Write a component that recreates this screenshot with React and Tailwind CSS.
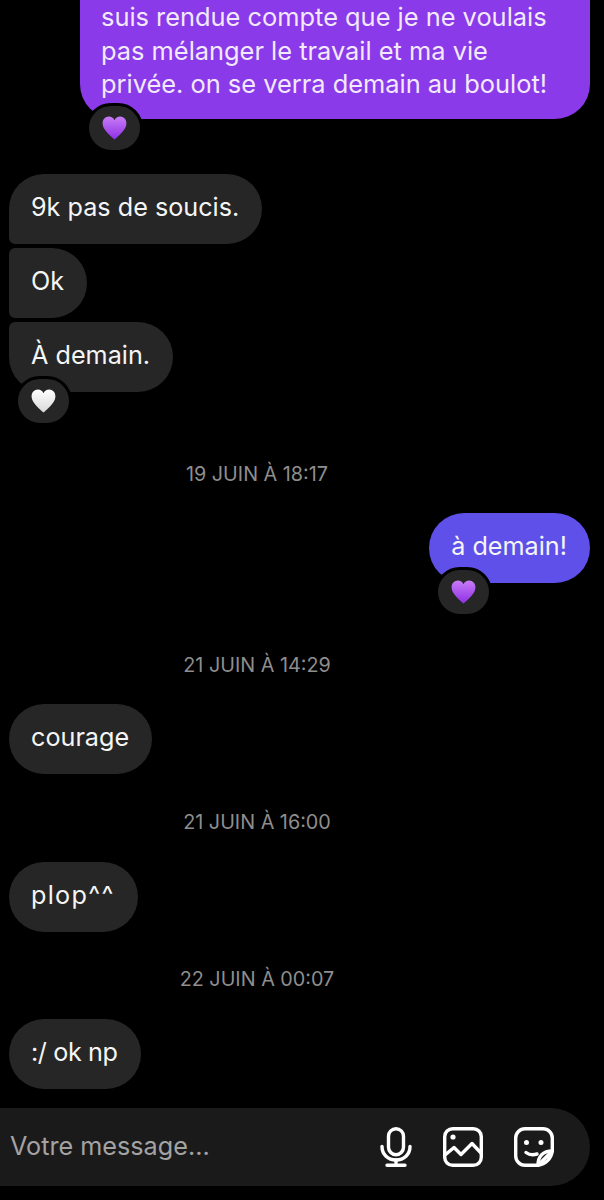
import React from "react";

const HEART = "M12.5 23.5C10 21 1 14.5 .6 8 .3 3.5 3.4 .6 6.9 .6c2.5 0 4.5 1.4 5.6 3.6C13.6 2 15.6 .6 18.1 .6c3.5 0 6.6 2.9 6.3 7.4-.4 6.5-9.4 13-11.9 15.5z";

function Heart({ id, from, to }) {
  return (
    <svg width="25" height="24" viewBox="0 0 25 24">
      <defs>
        <linearGradient id={id} x1="0" y1="0" x2="0" y2="1">
          <stop offset="0" stopColor={from} />
          <stop offset="1" stopColor={to} />
        </linearGradient>
      </defs>
      <path d={HEART} fill={`url(#${id})`} />
    </svg>
  );
}

function Reaction({ id, white, className }) {
  return (
    <div className={`absolute bottom-[-34px] flex h-[50px] w-[57px] items-center justify-center rounded-full border-[3px] border-black bg-[#262626] ${className}`}>
      {white ? <Heart id={id} from="#ffffff" to="#d9d9d9" /> : <Heart id={id} from="#c77cf5" to="#8f2fe6" />}
    </div>
  );
}

function Received({ children, corners = "rounded-[35px]", className = "" }) {
  return (
    <div className={`relative ml-[9px] flex h-[70px] w-fit items-center bg-[#262626] pb-[2px] pl-[22px] pr-[23px] ${corners} ${className}`}>
      {children}
    </div>
  );
}

function Stamp({ children, className }) {
  return (
    <div className={`flex h-[24px] items-center justify-center pr-[90px] pt-[2px] text-[19.8px] text-[#8e8e8e] ${className}`}>
      {children}
    </div>
  );
}

function MicIcon() {
  return (
    <svg width="32" height="40" viewBox="0 0 32 40" fill="none" stroke="#fff" strokeWidth="3.4" strokeLinecap="round" strokeLinejoin="round">
      <rect x="8.5" y="1.7" width="15" height="26" rx="7.5" />
      <path d="M2 19.5c0 8 6 13.5 14 13.5s14-5.500 14-13.500" />
      <path d="M16 33v5M7 38.300h18" />
    </svg>
  );
}

function ImageIcon() {
  return (
    <svg width="40" height="40" viewBox="0 0 40 40" fill="none" stroke="#fff" strokeWidth="3.400" strokeLinecap="round" strokeLinejoin="round">
      <rect x="1.700" y="1.700" width="36.600" height="36.600" rx="8" />
      <path d="M2 28l9-7.500 7 7 11-11 9 9.500" />
      <circle cx="10" cy="10" r="2.600" fill="#fff" stroke="none" />
    </svg>
  );
}

function StickerIcon() {
  return (
    <svg width="40" height="40" viewBox="0 0 40 40" fill="none" stroke="#fff" strokeWidth="3.400" strokeLinecap="round" strokeLinejoin="round">
      <path d="M24 38.300H11a9.300 9.300 0 0 1-9.300-9.300V11A9.300 9.300 0 0 1 11 1.700h18a9.300 9.300 0 0 1 9.300 9.300v13z" />
      <path d="M24 38.300c0-9 5-14.300 14.300-14.300-1 7.500-6.800 13.300-14.300 14.300z" />
      <path d="M12 25.500c3 2.200 7 2.700 11 1.500" />
      <circle cx="12.500" cy="15.500" r="2.500" fill="#fff" stroke="none" />
      <circle cx="27" cy="15.500" r="2.500" fill="#fff" stroke="none" />
    </svg>
  );
}

export default function App() {
  return (
    <div className="flex h-[1200px] w-[604px] flex-col overflow-hidden bg-black font-['Inter',sans-serif] text-[25.2px] text-[#f5f5f5]">

      {/* Sent message, cut off by the top of the screen */}
      <div className="relative ml-[80px] mr-[14px] rounded-b-[35px] bg-[#8a3ae8] pb-[18px] pl-[21px] pr-[20px] text-[25.4px] leading-[33.5px] text-[#f3e9fd]">
        <div>suis rendue compte que je ne voulais</div>
        <div>pas mélanger le travail et ma vie</div>
        <div>privée. on se verra demain au boulot!</div>
        <Reaction id="h1" className="left-[6px]" />
      </div>

      <Received corners="rounded-[35px] rounded-bl-[6px]" className="mt-[55px]">9k pas de soucis.</Received>
      <Received corners="rounded-r-[35px] rounded-l-[6px]" className="mt-[4px]">Ok</Received>
      <Received corners="rounded-[35px] rounded-tl-[6px]" className="mt-[4px]">
        À demain.
        <Reaction id="h2" white className="left-[6px]" />
      </Received>

      <Stamp className="mt-[70px]">19 JUIN À 18:17</Stamp>

      <div className="relative mr-[14px] mt-[27px] flex h-[70px] w-fit items-center self-end rounded-[35px] bg-[#5e50e8] pb-[2px] pl-[22px] pr-[23px]">
        à demain!
        <Reaction id="h3" className="left-[6px]" />
      </div>

      <Stamp className="mt-[70px]">21 JUIN À 14:29</Stamp>
      <Received className="mt-[27px]">courage</Received>

      <Stamp className="mt-[36px]">21 JUIN À 16:00</Stamp>
      <Received className="mt-[28px]">
        <span className="tracking-[1.3px]">plop^^</span>
      </Received>

      <Stamp className="mt-[35px]">22 JUIN À 00:07</Stamp>
      <Received className="mt-[28px]">
        <span className="tracking-[-0.4px]">:/ ok np</span>
      </Received>

      {/* Message input */}
      <div className="mr-[14px] mt-[19px] flex h-[78px] items-center rounded-r-[39px] bg-[#1a1a1a] pl-[10px] pr-[36px]">
        <span className="flex-1 pt-[1px] text-[#a3a3a3]">Votre message...</span>
        <div className="flex items-center gap-[31px]">
          <MicIcon />
          <ImageIcon />
          <StickerIcon />
        </div>
      </div>

    </div>
  );
}
